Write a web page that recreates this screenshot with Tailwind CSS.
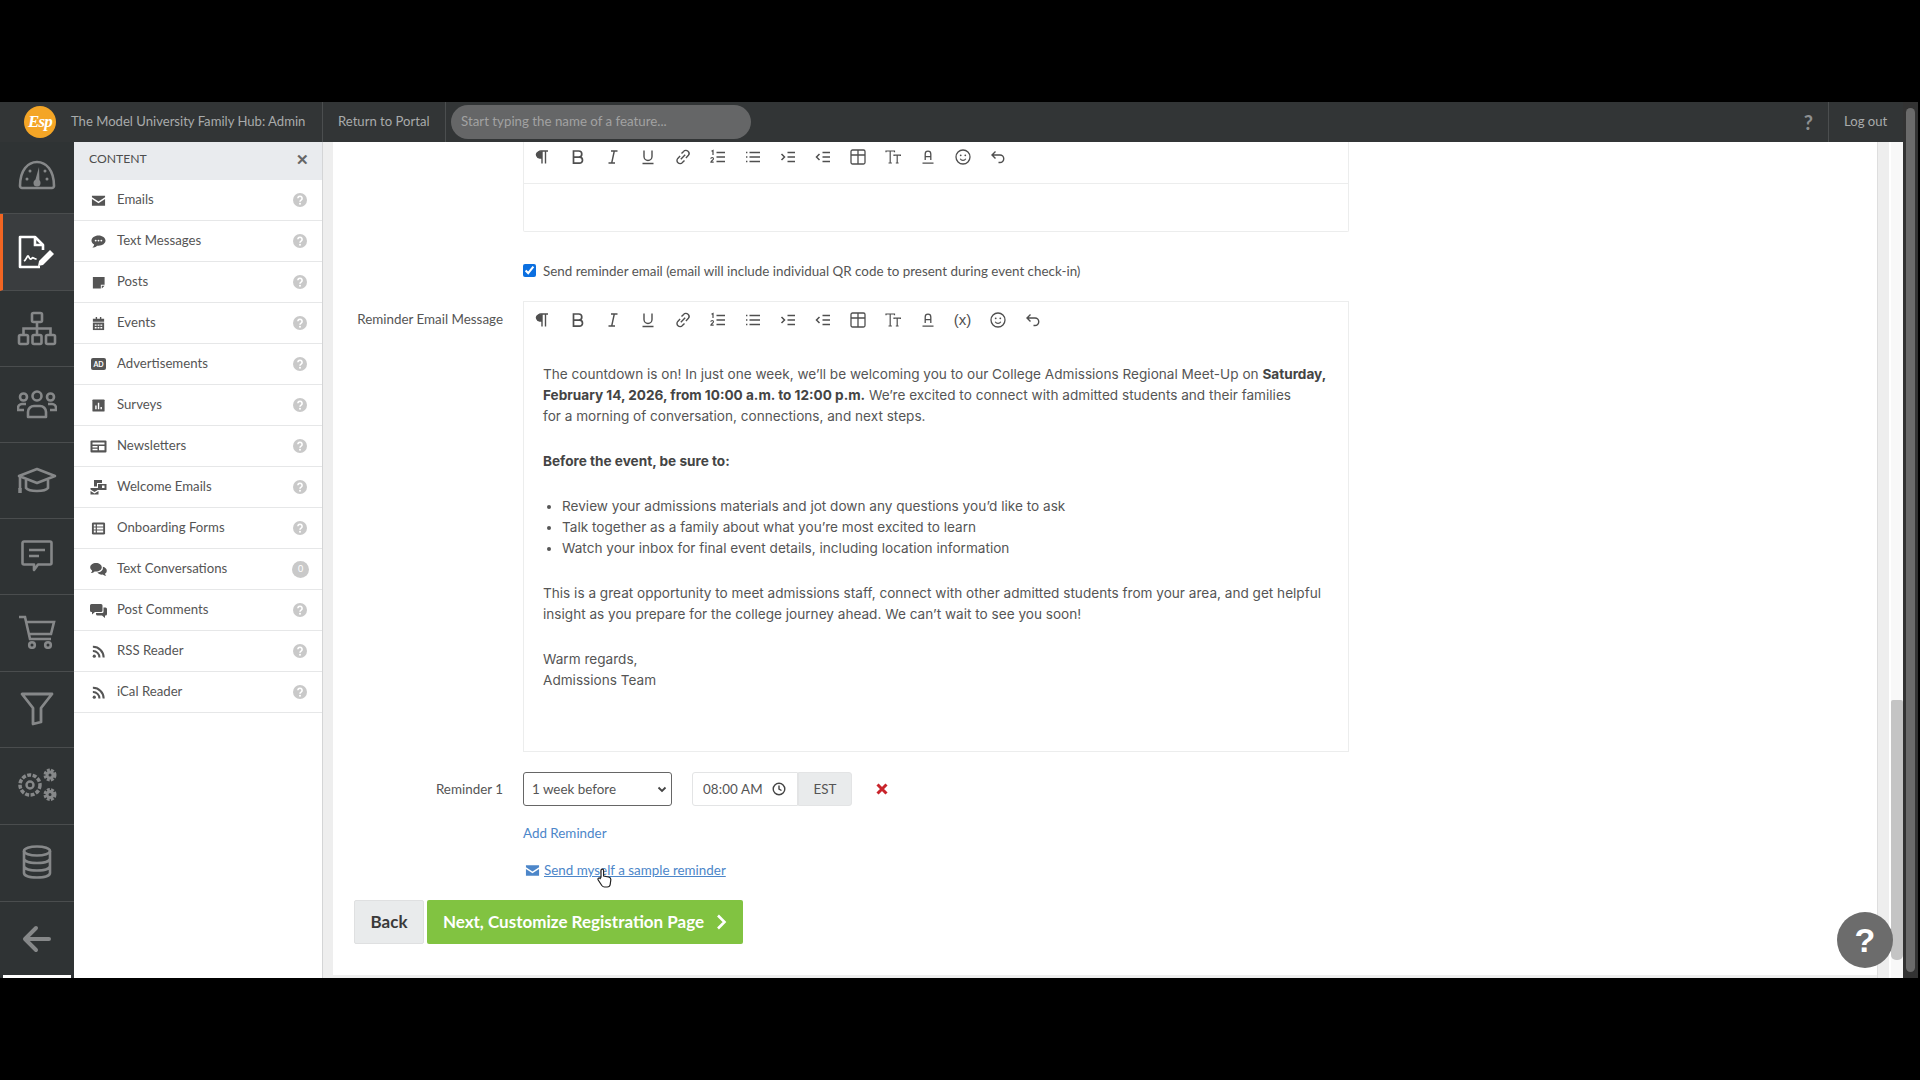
<!DOCTYPE html>
<html>
<head>
    <meta charset="utf-8">
    <title>Family Hub Admin</title>
    <script src="https://cdn.jsdelivr.net/npm/@tailwindcss/browser@4"></script>
</head>
<body class="bg-black h-screen overflow-hidden font-['Lato',sans-serif]">
    <svg class="hidden">
        <symbol id="t-para" viewBox="0 0 16 16"><path d="M7 14.500V2M10.500 14.500V2M13 2H6a3.500 3.500 0 0 0 0 7h1" fill="none" stroke="currentColor" stroke-width="1.400"/><path d="M3 2.500h4V9H6a3.300 3.300 0 0 1-3-6.500z" fill="currentColor"/></symbol>
        <symbol id="t-bold" viewBox="0 0 16 16"><path d="M3.500 2h5.200a3 3 0 0 1 0 6.200H3.500zM3.500 8.200h6a3 3 0 0 1 0 6h-6z" fill="none" stroke="currentColor" stroke-width="1.700"/></symbol>
        <symbol id="t-italic" viewBox="0 0 16 16"><path d="M6 2h6.500M3.500 14H10M9.300 2 6.700 14" fill="none" stroke="currentColor" stroke-width="1.400"/></symbol>
        <symbol id="t-under" viewBox="0 0 16 16"><path d="M4 1.500v6a4 4 0 0 0 8 0v-6M2.500 14.500h11" fill="none" stroke="currentColor" stroke-width="1.400"/></symbol>
        <symbol id="t-link" viewBox="0 0 16 16"><path d="M6.500 4.500 8.600 2.400a3 3 0 0 1 4.600 4.200l-2.300 2.300M9.500 11.500l-2.100 2.100a3 3 0 0 1-4.600-4.200l2.300-2.300M5.800 10.200l4.400-4.400" fill="none" stroke="currentColor" stroke-width="1.400"/></symbol>
        <symbol id="t-ol" viewBox="0 0 16 16"><path d="M6.500 3.500H15M6.500 8H15M6.500 12.500H15" fill="none" stroke="currentColor" stroke-width="1.300"/><path d="M1.500 2.300 3 1.500v4.400M.9 9.800a1.300 1.300 0 0 1 2.600 0c0 1.200-2.600 2.300-2.600 3.400h2.800" fill="none" stroke="currentColor" stroke-width="1.200"/></symbol>
        <symbol id="t-ul" viewBox="0 0 16 16"><path d="M4.500 3.500H15M4.500 8H15M4.500 12.500H15" fill="none" stroke="currentColor" stroke-width="1.300"/><path d="M1 3.500h1.400M1 8h1.400M1 12.500h1.400" stroke="currentColor" stroke-width="1.300"/></symbol>
        <symbol id="t-indent" viewBox="0 0 16 16"><path d="M7.500 3.500H15M7.500 8H15M7.500 12.500H15" fill="none" stroke="currentColor" stroke-width="1.300"/><path d="m1.500 5 3 3-3 3" fill="none" stroke="currentColor" stroke-width="1.500"/></symbol>
        <symbol id="t-outdent" viewBox="0 0 16 16"><path d="M7.500 3.500H15M7.500 8H15M7.500 12.500H15" fill="none" stroke="currentColor" stroke-width="1.300"/><path d="m4.500 5-3 3 3 3" fill="none" stroke="currentColor" stroke-width="1.500"/></symbol>
        <symbol id="t-table" viewBox="0 0 16 16"><rect x="1" y="1" width="14" height="14" rx="1.500" fill="none" stroke="currentColor" stroke-width="1.300"/><path d="M1 6h14M8 1v14" fill="none" stroke="currentColor" stroke-width="1.300"/></symbol>
        <symbol id="t-size" viewBox="0 0 16 16"><path d="M1 3.200V2h8.500v1.200M5.200 2v12M3.500 14h3.400M9 7v-.8h6.400V7M12.200 6.200V14M10.800 14h2.800" fill="none" stroke="currentColor" stroke-width="1.200"/></symbol>
        <symbol id="t-color" viewBox="0 0 16 16"><path d="M5.200 11V5a2.800 2.800 0 0 1 5.600 0v6M5.200 7.600h5.600M2.500 14.200h11" fill="none" stroke="currentColor" stroke-width="1.300"/></symbol>
        <symbol id="t-smile" viewBox="0 0 16 16"><circle cx="8" cy="8" r="7" fill="none" stroke="currentColor" stroke-width="1.300"/><circle cx="5.700" cy="6.300" r=".9" fill="currentColor"/><circle cx="10.300" cy="6.300" r=".9" fill="currentColor"/><path d="M5.200 9.800a3.200 3.200 0 0 0 5.600 0" fill="none" stroke="currentColor" stroke-width="1.200"/></symbol>
        <symbol id="t-undo" viewBox="0 0 16 16"><path d="M5.500 2.500 2 6l3.500 3.500M2 6h8a3.700 3.700 0 0 1 0 7.500H8.500" fill="none" stroke="currentColor" stroke-width="1.400"/></symbol>
        <symbol id="q-help" viewBox="0 0 14 14"><circle cx="7" cy="7" r="7" fill="#c9c9c9"/><path d="M4.900 5.300a2.100 2.100 0 1 1 3.200 1.800c-.8.500-1.100.8-1.100 1.600" fill="none" stroke="#fff" stroke-width="1.600"/><circle cx="7" cy="10.800" r="1" fill="#fff"/></symbol>
        <symbol id="p-rss" viewBox="0 0 16 16"><circle cx="3.500" cy="13" r="1.700" fill="currentColor"/><path d="M2 7.500A6.800 6.800 0 0 1 9 14.500M2 3a11.300 11.300 0 0 1 11.500 11.500" fill="none" stroke="currentColor" stroke-width="2.200"/></symbol>
    </svg>

    <div class="h-[102px]"></div>
    <div class="flex h-[876px] w-[1918px] relative">
        <div class="w-[1903px] flex flex-col">
            <!-- top bar -->
            <div class="h-[40px] bg-[#323536] flex items-center text-[13.1px] text-[#a9abab]">
                <div class="w-[71px] flex justify-end pr-[15px]">
                    <div class="w-[32px] h-[32px] rounded-full bg-[#f4a526] text-white flex items-center justify-center font-['Liberation_Serif',serif] font-bold italic text-[17px] tracking-tighter">Esp</div>
                </div>
                <div class="w-[252px] h-full pb-[1px] flex items-center border-r border-[#4b4e4f] whitespace-nowrap">The Model University Family Hub: Admin</div>
                <div class="w-[123px] h-full pb-[1px] flex items-center pl-[15px] border-r border-[#4b4e4f] whitespace-nowrap">Return to Portal</div>
                <div class="ml-[5px] w-[300px] h-[34px] rounded-full bg-[#656667] flex items-center pl-[10px] text-[#a2a2a2] text-[13.3px]">Start typing the name of a feature...</div>
                <div class="ml-auto font-bold text-[20px] text-[#8e9091] mr-[15px]">?</div>
                <div class="h-full w-[75px] pb-[1px] flex items-center pl-[15px] border-l border-[#4b4e4f] whitespace-nowrap">Log out</div>
            </div>

            <div class="flex flex-1 min-h-0">
                <!-- icon rail -->
                <div class="w-[74px] bg-[#2f3334] flex flex-col text-[#868889]">
                    <div class="h-[72px] pb-[5px] flex items-center justify-center border-b border-[#4a4d4e]">
                        <svg class="w-[38px] h-[34px]" viewBox="0 0 38 34" fill="none" stroke="currentColor" stroke-width="2.600"><path d="M2 28C2 12 10 4 19 4s17 8 17 24c0 1-1 2-2 2H4c-1 0-2-1-2-2z" stroke-linejoin="round"/><path d="M16.500 25 21 9l.5 16z" fill="currentColor" stroke="none"/><circle cx="19" cy="25" r="3.500" fill="currentColor" stroke="none"/><circle cx="9" cy="21" r="1.500" fill="currentColor" stroke="none"/><circle cx="12" cy="13" r="1.500" fill="currentColor" stroke="none"/><circle cx="29" cy="21" r="1.500" fill="currentColor" stroke="none"/><circle cx="27" cy="13" r="1.500" fill="currentColor" stroke="none"/></svg>
                    </div>
                    <div class="h-[77px] flex items-center justify-center border-b border-[#4a4d4e] border-l-[3px] border-l-[#f26522] bg-[#3a3d3f] text-white pr-[3px]">
                        <svg class="w-[38px] h-[34px]" viewBox="0 0 38 34" fill="none" stroke="currentColor" stroke-width="2.600"><path d="M22 32H2V2h15l8 8v5" stroke-linejoin="round"/><path d="M17 2v8h8"/><path d="M6 26c2-1 3-5 4-5s1 3 2.500 3 1.500-2 3-1 2 1 3 1" stroke-width="1.800"/><path d="m21 26 11-11 4 4-11 11-5 1z" fill="currentColor" stroke="none"/></svg>
                    </div>
                    <div class="h-[76px] flex items-center justify-center border-b border-[#4a4d4e]">
                        <svg class="w-[40px] h-[36px]" viewBox="0 0 40 36" fill="none" stroke="currentColor" stroke-width="2.600"><rect x="15" y="2" width="10" height="9" rx="1.500"/><rect x="2" y="24" width="9" height="9" rx="1.500"/><rect x="15.500" y="24" width="9" height="9" rx="1.500"/><rect x="29" y="24" width="9" height="9" rx="1.500"/><path d="M20 11v13M6.500 24v-6.500h27V24"/></svg>
                    </div>
                    <div class="h-[76px] flex items-center justify-center border-b border-[#4a4d4e]">
                        <svg class="w-[40px] h-[30px]" viewBox="0 0 40 30" fill="none" stroke="currentColor" stroke-width="2.600"><circle cx="20" cy="6" r="4.500"/><circle cx="6.500" cy="7" r="3.500"/><circle cx="33.500" cy="7" r="3.500"/><path d="M11 27v-5a6 6 0 0 1 6-6h6a6 6 0 0 1 6 6v5z" stroke-linejoin="round"/><path d="M9 14H5a4 4 0 0 0-4 4v2h6M31 14h4a4 4 0 0 1 4 4v2h-6"/></svg>
                    </div>
                    <div class="h-[76px] flex items-center justify-center border-b border-[#4a4d4e]">
                        <svg class="w-[40px] h-[28px]" viewBox="0 0 40 28" fill="none" stroke="currentColor" stroke-width="2.600"><path d="M20 2 38 9 20 16 2 9z" stroke-linejoin="round"/><path d="M9 13v8c3 4 19 4 22 0v-8"/><path d="M3 10v12"/><path d="M3 21v5" stroke-width="3.500"/></svg>
                    </div>
                    <div class="h-[76px] pb-[2px] flex items-center justify-center border-b border-[#4a4d4e]">
                        <svg class="w-[32px] h-[32px]" viewBox="0 0 32 32" fill="none" stroke="currentColor" stroke-width="2.600"><path d="M3 1.500h26a1.500 1.500 0 0 1 1.500 1.500v20a1.500 1.500 0 0 1-1.500 1.500H17l-4 5.500v-5.500H3A1.500 1.500 0 0 1 1.500 23V3A1.500 1.500 0 0 1 3 1.500z" stroke-linejoin="round"/><path d="M8 10h16M8 16h10"/></svg>
                    </div>
                    <div class="h-[77px] pb-[2px] flex items-center justify-center border-b border-[#4a4d4e]">
                        <svg class="w-[38px] h-[34px]" viewBox="0 0 38 34" fill="none" stroke="currentColor" stroke-width="2.600"><path d="M1 2h6l5 22h21M8 7h28l-3 12H11"/><circle cx="14" cy="30" r="2.800"/><circle cx="30" cy="30" r="2.800"/></svg>
                    </div>
                    <div class="h-[76px] pb-[2px] flex items-center justify-center border-b border-[#4a4d4e]">
                        <svg class="w-[34px] h-[34px]" viewBox="0 0 34 34" fill="none" stroke="currentColor" stroke-width="2.800" stroke-linejoin="round"><path d="M2 2h30L21 16v14l-8 2V16z"/></svg>
                    </div>
                    <div class="h-[77px] pb-[3px] flex items-center justify-center border-b border-[#4a4d4e]">
                        <svg class="w-[40px] h-[34px]" viewBox="0 0 40 34" fill="none" stroke="currentColor"><circle cx="13" cy="17" r="10" stroke-width="3.500" stroke-dasharray="4 1.500"/><circle cx="13" cy="17" r="3.500" stroke-width="2.400"/><circle cx="33" cy="7" r="4.500" stroke-width="4" stroke-dasharray="2.500 1.100"/><circle cx="33" cy="7" r="3" stroke-width="3"/><circle cx="33" cy="26.500" r="4.500" stroke-width="4" stroke-dasharray="2.500 1.100"/><circle cx="33" cy="26.500" r="3" stroke-width="3"/></svg>
                    </div>
                    <div class="h-[77px] pb-[2px] flex items-center justify-center border-b border-[#4a4d4e]">
                        <svg class="w-[30px] h-[34px]" viewBox="0 0 30 34" fill="none" stroke="currentColor" stroke-width="2.600"><ellipse cx="15" cy="6" rx="13" ry="4.500"/><path d="M2 6v22c0 6 26 6 26 0V6M2 13.500c0 6 26 6 26 0M2 21c0 6 26 6 26 0"/></svg>
                    </div>
                    <div class="flex-1 flex items-center justify-center">
                        <svg class="w-[30px] h-[28px]" viewBox="0 0 30 28" fill="none" stroke="currentColor" stroke-width="4" stroke-linecap="round" stroke-linejoin="round"><path d="M27 14H4M14 3 3 14l11 11"/></svg>
                    </div>
                    <div class="h-[3px] mx-[3px] bg-white"></div>
                </div>

                <!-- content menu -->
                <div class="w-[249px] bg-white border-r border-[#d4d5d6] flex flex-col text-[13.2px] text-[#555]">
                    <div class="h-[38px] pb-[3px] bg-[#e9ebee] flex items-center justify-between pl-[15px] pr-[13px] text-[#4d4d4d]"><span class="text-[12.2px]">CONTENT</span><span class="font-bold text-[#666] text-[15px]">✕</span></div>
                    <div class="h-[41px] flex items-center border-b border-[#e6e7e8] pl-[17px] pr-[15px]">
                        <svg class="w-[15px] h-[15px] mr-[11px] text-[#555]" viewBox="0 0 16 16"><path d="M1 3h14v1.500L8 9 1 4.500zM1 6.500 8 11l7-4.500v7H1z" fill="currentColor"/></svg><span>Emails</span><svg class="w-[14px] h-[14px] ml-auto"><use href="#q-help"/></svg>
                    </div>
                    <div class="h-[41px] flex items-center border-b border-[#e6e7e8] pl-[17px] pr-[15px]">
                        <svg class="w-[15px] h-[15px] mr-[11px] text-[#555]" viewBox="0 0 16 16"><path d="M8 1.500c4.200 0 7.500 2.500 7.500 5.500S12.200 12.500 8 12.500l-1.500-.1C5 14 3 14.500 1.500 14.500c1-.8 1.800-2 1.900-3.200C1.500 10.300.5 8.800.5 7 .5 4 3.800 1.500 8 1.500z" fill="currentColor"/><circle cx="5" cy="7" r="1" fill="#fff"/><circle cx="8" cy="7" r="1" fill="#fff"/><circle cx="11" cy="7" r="1" fill="#fff"/></svg><span>Text Messages</span><svg class="w-[14px] h-[14px] ml-auto"><use href="#q-help"/></svg>
                    </div>
                    <div class="h-[41px] flex items-center border-b border-[#e6e7e8] pl-[17px] pr-[15px]">
                        <svg class="w-[15px] h-[15px] mr-[11px] text-[#555]" viewBox="0 0 16 16"><path d="M2 2h12.500v8.500h-4v4H2zM11.500 11.500h3l-3 3z" fill="currentColor"/></svg><span>Posts</span><svg class="w-[14px] h-[14px] ml-auto"><use href="#q-help"/></svg>
                    </div>
                    <div class="h-[41px] flex items-center border-b border-[#e6e7e8] pl-[17px] pr-[15px]">
                        <svg class="w-[15px] h-[15px] mr-[11px] text-[#555]" viewBox="0 0 16 16"><path d="M2 3h3V1h1.500v2h3V1H11v2h3v3H2z" fill="currentColor"/><path d="M2 7h12v8H2z" fill="currentColor"/><path d="M4 9h2v1.500H4zM7 9h2v1.500H7zM10 9h2v1.500h-2zM4 11.800h2v1.500H4zM7 11.800h2v1.500H7zM10 11.800h2v1.500h-2z" fill="#fff"/></svg><span>Events</span><svg class="w-[14px] h-[14px] ml-auto"><use href="#q-help"/></svg>
                    </div>
                    <div class="h-[41px] flex items-center border-b border-[#e6e7e8] pl-[17px] pr-[15px]">
                        <span class="w-[15px] h-[12px] mr-[11px] rounded-[2px] bg-[#555] text-white text-[7px] font-bold leading-[12px] text-center">AD</span><span>Advertisements</span><svg class="w-[14px] h-[14px] ml-auto"><use href="#q-help"/></svg>
                    </div>
                    <div class="h-[41px] flex items-center border-b border-[#e6e7e8] pl-[17px] pr-[15px]">
                        <svg class="w-[15px] h-[15px] mr-[11px] text-[#555]" viewBox="0 0 16 16"><rect x="1.500" y="1.500" width="13" height="13" rx="1" fill="currentColor"/><path d="M4.500 8H6v4H4.500zM7.300 5h1.500v7H7.300zM10.100 9.500h1.500V12h-1.500z" fill="#fff"/></svg><span>Surveys</span><svg class="w-[14px] h-[14px] ml-auto"><use href="#q-help"/></svg>
                    </div>
                    <div class="h-[41px] flex items-center border-b border-[#e6e7e8] pl-[16px] pr-[15px]">
                        <svg class="w-[17px] h-[15px] mr-[10px] text-[#555]" viewBox="0 0 17 15"><rect x=".500" y="1.500" width="16" height="12" rx="1" fill="currentColor"/><path d="M2.500 3.500h12v2h-12zM2.500 7h5v1.500h-5zM2.500 9.800h5v1.500h-5zM9 7h5.500v4.300H9z" fill="#fff"/></svg><span>Newsletters</span><svg class="w-[14px] h-[14px] ml-auto"><use href="#q-help"/></svg>
                    </div>
                    <div class="h-[41px] flex items-center border-b border-[#e6e7e8] pl-[16px] pr-[15px]">
                        <svg class="w-[17px] h-[16px] mr-[10px] text-[#555]" viewBox="0 0 17 16"><path d="M4 1h8v3H7v3.500H4zM8 5h8.500v6H8z" fill="currentColor"/><path d="M.5 9h8v1.500L4.500 13l-4-2.500zM.5 12l4 2.500 4-2.500v3.500h-8z" fill="currentColor"/><rect x="12" y="6.500" width="2.500" height="2.500" fill="#fff"/></svg><span>Welcome Emails</span><svg class="w-[14px] h-[14px] ml-auto"><use href="#q-help"/></svg>
                    </div>
                    <div class="h-[41px] flex items-center border-b border-[#e6e7e8] pl-[17px] pr-[15px]">
                        <svg class="w-[15px] h-[15px] mr-[11px] text-[#555]" viewBox="0 0 16 16"><rect x="1" y="1.500" width="14" height="13" rx="1.500" fill="currentColor"/><path d="M3 3.800h2v2H3zM6.300 3.800H13v2H6.300zM3 7h2v2H3zM6.300 7H13v2H6.300zM3 10.200h2v2H3zM6.300 10.200H13v2H6.300z" fill="#fff"/></svg><span>Onboarding Forms</span><svg class="w-[14px] h-[14px] ml-auto"><use href="#q-help"/></svg>
                    </div>
                    <div class="h-[41px] flex items-center border-b border-[#e6e7e8] pl-[16px] pr-[13px]">
                        <svg class="w-[17px] h-[15px] mr-[10px] text-[#555]" viewBox="0 0 17 15"><path d="M6 1c3.200 0 5.800 1.900 5.800 4.300S9.200 9.600 6 9.600c-.5 0-1 0-1.400-.1C3.500 10.500 2 11 .8 11c.7-.6 1.300-1.500 1.300-2.500C.9 7.700.2 6.600.2 5.300.2 2.900 2.800 1 6 1z" fill="currentColor"/><path d="M12.800 4.800c2.300.4 4 2 4 3.900 0 1.200-.6 2.200-1.700 2.900 0 .9.500 1.800 1.200 2.400-1.200 0-2.600-.5-3.600-1.400-2.300.2-4.500-.7-5.300-2.300 3 .2 6.200-1.700 5.400-5.500z" fill="currentColor"/></svg><span>Text Conversations</span><span class="ml-auto w-[17px] h-[17px] rounded-full bg-[#c9c9c9] text-white text-[9px] flex items-center justify-center">0</span>
                    </div>
                    <div class="h-[41px] flex items-center border-b border-[#e6e7e8] pl-[16px] pr-[15px]">
                        <svg class="w-[17px] h-[15px] mr-[10px] text-[#555]" viewBox="0 0 17 15"><path d="M1.500 1H11a1.500 1.500 0 0 1 1.500 1.500v5A1.500 1.500 0 0 1 11 9H5l-3 2.500V9h-.5A1.500 1.500 0 0 1 0 7.500v-5A1.500 1.500 0 0 1 1.500 1z" fill="currentColor"/><path d="M13.500 4.500h2A1.500 1.500 0 0 1 17 6v5a1.500 1.500 0 0 1-1.500 1.500H15V15l-3-2.500H7.500A1.500 1.500 0 0 1 6 11v-1h6a1.500 1.500 0 0 0 1.500-1.500z" fill="currentColor"/></svg><span>Post Comments</span><svg class="w-[14px] h-[14px] ml-auto"><use href="#q-help"/></svg>
                    </div>
                    <div class="h-[41px] flex items-center border-b border-[#e6e7e8] pl-[17px] pr-[15px]">
                        <svg class="w-[15px] h-[15px] mr-[11px] text-[#555]"><use href="#p-rss"/></svg><span>RSS Reader</span><svg class="w-[14px] h-[14px] ml-auto"><use href="#q-help"/></svg>
                    </div>
                    <div class="h-[41px] flex items-center border-b border-[#e6e7e8] pl-[17px] pr-[15px]">
                        <svg class="w-[15px] h-[15px] mr-[11px] text-[#555]"><use href="#p-rss"/></svg><span>iCal Reader</span><svg class="w-[14px] h-[14px] ml-auto"><use href="#q-help"/></svg>
                    </div>
                </div>

                <div class="w-[10px] bg-[#eeeeee]"></div>

                <!-- form -->
                <div class="w-[1544px] bg-white border-b-[3px] border-[#eeeeee] text-[13.4px] text-[#555] overflow-hidden">
                    <div class="ml-[190px] w-[826px] h-[90px] border-x border-b border-[#eceded] rounded-b-[2px]">
                        <div class="h-[42px] pb-[12px] pl-[1px] flex items-center border-b border-[#eceded] text-[#4f4f4f]">
                            <span class="w-[35px] flex justify-center"><svg class="w-[16px] h-[16px]"><use href="#t-para"/></svg></span>
                            <span class="w-[35px] flex justify-center"><svg class="w-[16px] h-[16px]"><use href="#t-bold"/></svg></span>
                            <span class="w-[35px] flex justify-center"><svg class="w-[16px] h-[16px]"><use href="#t-italic"/></svg></span>
                            <span class="w-[35px] flex justify-center"><svg class="w-[16px] h-[16px]"><use href="#t-under"/></svg></span>
                            <span class="w-[35px] flex justify-center"><svg class="w-[16px] h-[16px]"><use href="#t-link"/></svg></span>
                            <span class="w-[35px] flex justify-center"><svg class="w-[16px] h-[16px]"><use href="#t-ol"/></svg></span>
                            <span class="w-[35px] flex justify-center"><svg class="w-[16px] h-[16px]"><use href="#t-ul"/></svg></span>
                            <span class="w-[35px] flex justify-center"><svg class="w-[16px] h-[16px]"><use href="#t-indent"/></svg></span>
                            <span class="w-[35px] flex justify-center"><svg class="w-[16px] h-[16px]"><use href="#t-outdent"/></svg></span>
                            <span class="w-[35px] flex justify-center"><svg class="w-[16px] h-[16px]"><use href="#t-table"/></svg></span>
                            <span class="w-[35px] flex justify-center"><svg class="w-[16px] h-[16px]"><use href="#t-size"/></svg></span>
                            <span class="w-[35px] flex justify-center"><svg class="w-[16px] h-[16px]"><use href="#t-color"/></svg></span>
                            <span class="w-[35px] flex justify-center"><svg class="w-[16px] h-[16px]"><use href="#t-smile"/></svg></span>
                            <span class="w-[35px] flex justify-center"><svg class="w-[16px] h-[16px]"><use href="#t-undo"/></svg></span>
                        </div>
                    </div>

                    <label class="ml-[190px] mt-[29px] h-[18px] flex items-center gap-[7px]">
                        <input type="checkbox" checked class="w-[13px] h-[13px] accent-[#0b6fe0]">
                        <span class="pt-[2px]">Send reminder email (email will include individual QR code to present during event check-in)</span>
                    </label>

                    <div class="mt-[22px] flex">
                        <div class="w-[170px] pt-[8px] text-right">Reminder Email Message</div>
                        <div class="ml-[20px] w-[826px] h-[451px] border border-[#eceded]">
                            <div class="h-[36px] pl-[1px] flex items-center text-[#4f4f4f]">
                                <span class="w-[35px] flex justify-center"><svg class="w-[16px] h-[16px]"><use href="#t-para"/></svg></span>
                                <span class="w-[35px] flex justify-center"><svg class="w-[16px] h-[16px]"><use href="#t-bold"/></svg></span>
                                <span class="w-[35px] flex justify-center"><svg class="w-[16px] h-[16px]"><use href="#t-italic"/></svg></span>
                                <span class="w-[35px] flex justify-center"><svg class="w-[16px] h-[16px]"><use href="#t-under"/></svg></span>
                                <span class="w-[35px] flex justify-center"><svg class="w-[16px] h-[16px]"><use href="#t-link"/></svg></span>
                                <span class="w-[35px] flex justify-center"><svg class="w-[16px] h-[16px]"><use href="#t-ol"/></svg></span>
                                <span class="w-[35px] flex justify-center"><svg class="w-[16px] h-[16px]"><use href="#t-ul"/></svg></span>
                                <span class="w-[35px] flex justify-center"><svg class="w-[16px] h-[16px]"><use href="#t-indent"/></svg></span>
                                <span class="w-[35px] flex justify-center"><svg class="w-[16px] h-[16px]"><use href="#t-outdent"/></svg></span>
                                <span class="w-[35px] flex justify-center"><svg class="w-[16px] h-[16px]"><use href="#t-table"/></svg></span>
                                <span class="w-[35px] flex justify-center"><svg class="w-[16px] h-[16px]"><use href="#t-size"/></svg></span>
                                <span class="w-[35px] flex justify-center"><svg class="w-[16px] h-[16px]"><use href="#t-color"/></svg></span>
                                <span class="w-[35px] flex justify-center text-[15px] font-['Liberation_Sans',sans-serif]">(x)</span>
                                <span class="w-[35px] flex justify-center"><svg class="w-[16px] h-[16px]"><use href="#t-smile"/></svg></span>
                                <span class="w-[35px] flex justify-center"><svg class="w-[16px] h-[16px]"><use href="#t-undo"/></svg></span>
                            </div>
                            <div class="pt-[26px] pl-[19px] pr-[21px] font-['Inter',sans-serif] text-[13.6px] leading-[21px] text-[#555]">
                                <p class="mb-[24px]">The countdown is on! In just one week, we’ll be welcoming you to our College Admissions Regional Meet-Up on <strong class="font-bold text-[#444]">Saturday, February 14, 2026, from 10:00 a.m. to 12:00 p.m.</strong> We’re excited to connect with admitted students and their families<br>for a morning of conversation, connections, and next steps.</p>
                                <p class="mb-[24px] font-bold text-[#444]">Before the event, be sure to:</p>
                                <ul class="mb-[24px] pl-[19px] list-disc">
                                    <li>Review your admissions materials and jot down any questions you’d like to ask</li>
                                    <li>Talk together as a family about what you’re most excited to learn</li>
                                    <li>Watch your inbox for final event details, including location information</li>
                                </ul>
                                <p class="mb-[24px]">This is a great opportunity to meet admissions staff, connect with other admitted students from your area, and get helpful insight as you prepare for the college journey ahead. We can’t wait to see you soon!</p>
                                <p>Warm regards,<br>Admissions Team</p>
                            </div>
                        </div>
                    </div>

                    <div class="mt-[20px] flex items-center h-[34px]">
                        <div class="w-[170px] text-right">Reminder 1</div>
                        <div class="ml-[20px] w-[149px] h-[34px] border-[1.5px] border-[#666] rounded-[3px] flex items-center justify-between pl-[8px] pr-[4px]">
                            <span>1 week before</span>
                            <svg class="w-[10px] h-[10px] text-[#444]" viewBox="0 0 10 10" fill="none" stroke="currentColor" stroke-width="1.800"><path d="m1.500 3.500 3.500 3.500 3.500-3.500"/></svg>
                        </div>
                        <div class="ml-[20px] w-[106px] h-[34px] border border-[#e3e4e5] rounded-l-[3px] flex items-center pl-[10px]">
                            <span class="tracking-[0.1px]">08:00 AM</span>
                            <svg class="w-[14px] h-[14px] ml-auto mr-[11px] text-[#444]" viewBox="0 0 14 14" fill="none" stroke="currentColor" stroke-width="1.400"><circle cx="7" cy="7" r="5.800"/><path d="M7 3.500V7l2.500 1.500"/></svg>
                        </div>
                        <div class="w-[54px] h-[34px] bg-[#e9ebec] border border-[#e3e4e5] rounded-r-[3px] flex items-center justify-center">EST</div>
                        <svg class="ml-[24px] w-[12px] h-[12px] text-[#c9242b]" viewBox="0 0 12 12" fill="none" stroke="currentColor" stroke-width="3"><path d="m1.500 1.500 9 9M10.500 1.500l-9 9"/></svg>
                    </div>

                    <div class="ml-[190px] mt-[17px] text-[#4c86c9] leading-[20px]">Add Reminder</div>
                    <div class="ml-[190px] mt-[17px] flex items-center text-[#4c86c9] leading-[20px]">
                        <svg class="ml-[2px] w-[15px] h-[15px] mr-[4px]" viewBox="0 0 16 16"><path d="M1 2.500h14v2L8 9 1 4.500zM1 6.500 8 11l7-4.500v7H1z" fill="currentColor"/></svg>
                        <span class="underline">Send myself a sample reminder</span>
                    </div>

                    <div class="ml-[21px] mt-[20px] flex gap-[3px]">
                        <button class="w-[70px] h-[44px] bg-[#e9ebec] border border-[#dfe0e1] rounded-[2px] text-[17px] font-bold text-[#3a3a3a]">Back</button>
                        <button class="w-[316px] h-[44px] bg-[#81c341] rounded-[2px] text-[17px] font-bold text-white flex items-center justify-center gap-[12px]">
                            <span>Next, Customize Registration Page</span>
                            <svg class="w-[11px] h-[16px]" viewBox="0 0 11 16" fill="none" stroke="currentColor" stroke-width="2.600"><path d="m2 1.500 6.500 6.500L2 14.500"/></svg>
                        </button>
                    </div>
                </div>

                <!-- inner scrollbar gutter -->
                <div class="w-[12px] bg-[#eeeeee] border-l border-[#dedede]"></div>
                <div class="w-[2px] bg-white"></div>
                <div class="w-[12px] bg-[#f8f8f8] pt-[558px]">
                    <div class="h-[260px] bg-[#c4c4c4] rounded-b-[5px] rounded-t-[2px]"></div>
                </div>
            </div>
        </div>

        <!-- outer scrollbar -->
        <div class="flex-1 bg-[#333333] px-[3px] py-[6px]">
            <div class="h-full bg-[#6b6b6b] rounded-full"></div>
        </div>

        <!-- floating help and pointer -->
        <div class="absolute left-[1837px] top-[810px] w-[56px] h-[56px] rounded-full bg-[#6c6c6c] text-white flex items-center justify-center font-bold text-[34px] font-['Liberation_Sans',sans-serif]">?</div>
        <svg class="absolute left-[597px] top-[766px] w-[15px] h-[20px]" viewBox="0 0 15 20"><path d="M4 9V2.500a1.300 1.300 0 0 1 2.600 0V8l5 1c1.500.3 2.400 1.500 2.200 3l-.6 4.500c-.2 1.500-1.300 2.500-3 2.500H7.500c-1.300 0-2-.6-2.700-1.500L1.200 12c-.9-1.400.8-2.800 2-1.500z" fill="#fff" stroke="#222" stroke-width="1.200"/></svg>
    </div>
</body>
</html>
